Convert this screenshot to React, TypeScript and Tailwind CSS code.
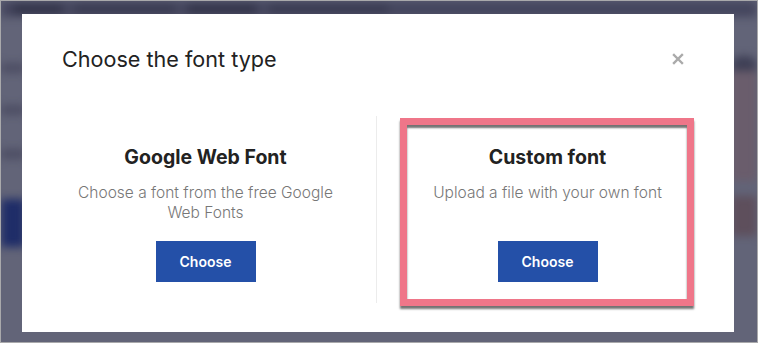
import React from "react";

function Column({ title, desc, children }: { title: string; desc: string; children?: React.ReactNode }) {
  return (
    <div className="relative flex-1 flex flex-col items-center pt-[28px] pb-[21px]">
      <h2 className="text-[19.5px] leading-[26px] font-bold text-[#222]">{title}</h2>
      <p className="mt-[13px] h-[40px] w-[280px] text-center text-[15.5px] leading-[20px] font-light text-[#777]">{desc}</p>
      <button className="mt-[18px] w-[100px] h-[41px] bg-[#2450a8] text-white text-[14px] font-semibold">Choose</button>
      {children}
    </div>
  );
}

export default function App() {
  return (
    <div
      className="relative w-[758px] h-[343px] overflow-hidden border border-[#a9a9ab] bg-[#626478]"
      style={{ fontFamily: "Inter, 'Noto Sans', sans-serif" }}
    >
      {/* blurred page behind the overlay */}
      <div className="absolute inset-0 blur-[4px]">
        <div className="h-[16px] bg-[#45465e] flex items-center gap-3 pl-3">
          <div className="h-[10px] w-[50px] bg-[#33344a] rounded" />
          <div className="h-[10px] w-[100px] bg-[#3a3b52] rounded" />
          <div className="h-[10px] w-[70px] bg-[#33344a] rounded" />
          <div className="h-[10px] w-[120px] bg-[#3a3b52] rounded" />
        </div>
        <div className="absolute left-0 top-[62px] w-[24px] h-[10px] bg-[#4d4e64]" />
        <div className="absolute left-0 top-[104px] w-[24px] h-[10px] bg-[#4d4e64]" />
        <div className="absolute left-0 top-[148px] w-[24px] h-[10px] bg-[#4d4e64]" />
        <div className="absolute left-0 top-[198px] w-[24px] h-[48px] bg-[#1f2d68]" />
        <div className="absolute right-0 top-[55px] w-[26px] h-[20px] bg-[#3e3f55] rounded-full" />
        <div className="absolute right-0 top-[70px] w-[26px] h-[110px] bg-[#6a5d6c]" />
        <div className="absolute right-0 top-[195px] w-[26px] h-[40px] bg-[#5e4f5c]" />
      </div>

      {/* modal */}
      <div className="absolute left-[21px] top-[13px] w-[712px] h-[318px] bg-white flex flex-col">
        <div className="h-[90px] flex items-center justify-between pl-[40px] pr-[50px]">
          <h1 className="text-[21.6px] leading-[30px] text-[#222] font-normal">Choose the font type</h1>
          <svg width="12" height="12" viewBox="0 0 12 12" className="text-[#aaa]">
            <path d="M2 2 L10 10 M10 2 L2 10" stroke="currentColor" strokeWidth="2.4" strokeLinecap="square" />
          </svg>
        </div>
        <div className="mt-[12px] flex pl-[13px] pr-[16px]">
          <div className="flex-1 flex border-r border-[#ececec]">
            <Column title="Google Web Font" desc="Choose a font from the free Google Web Fonts" />
          </div>
          <div className="flex-1 flex">
            <Column title="Custom font" desc="Upload a file with your own font">
              <div className="absolute left-[23px] top-[2px] w-[294px] h-[188px] border-[7px] border-[#ef7689] shadow-[0_3px_2px_rgba(0,0,0,0.55),inset_0_3px_2px_rgba(0,0,0,0.55)]" />
            </Column>
          </div>
        </div>
      </div>
    </div>
  );
}
